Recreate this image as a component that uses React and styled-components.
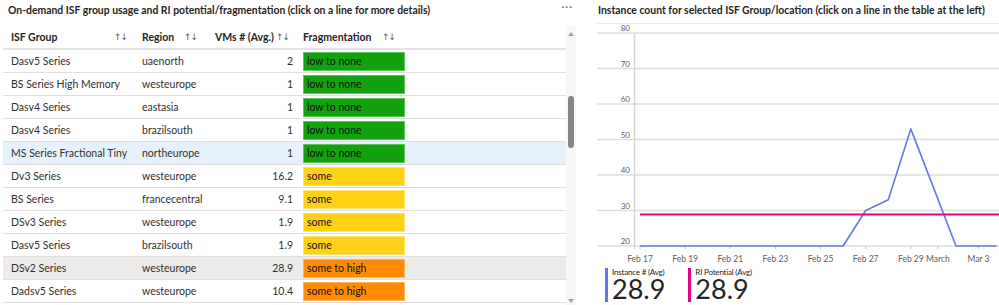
import React from "react";
import styled, { createGlobalStyle } from "styled-components";

const GlobalStyle = createGlobalStyle`
  html, body {
    margin: 0;
    padding: 0;
    background: #ffffff;
    overflow: hidden;
  }
  body {
    font-family: Lato, "Segoe UI", "Liberation Sans", sans-serif;
    color: #252423;
  }
`;

const rows = [
  { group: "Dasv5 Series", region: "uaenorth", vms: "2", frag: "low" },
  { group: "BS Series High Memory", region: "westeurope", vms: "1", frag: "low" },
  { group: "Dasv4 Series", region: "eastasia", vms: "1", frag: "low" },
  { group: "Dasv4 Series", region: "brazilsouth", vms: "1", frag: "low" },
  { group: "MS Series Fractional Tiny", region: "northeurope", vms: "1", frag: "low", state: "selected" },
  { group: "Dv3 Series", region: "westeurope", vms: "16.2", frag: "some" },
  { group: "BS Series", region: "francecentral", vms: "9.1", frag: "some" },
  { group: "DSv3 Series", region: "westeurope", vms: "1.9", frag: "some" },
  { group: "Dasv5 Series", region: "brazilsouth", vms: "1.9", frag: "some" },
  { group: "DSv2 Series", region: "westeurope", vms: "28.9", frag: "high", state: "hover" },
  { group: "Dadsv5 Series", region: "westeurope", vms: "10.4", frag: "high" },
];

const fragStyles = {
  low: { label: "low to none", bg: "#13a10e", border: "#5cc458" },
  some: { label: "some", bg: "#fcd116", border: "#fde274" },
  high: { label: "some to high", bg: "#ff8c00", border: "#ffb357" },
};

const rowBg = {
  selected: "#e6f1fb",
  hover: "#edebe9",
};

// chart scales
const dayX = (d) => 43 + d * 22.57;
const valY = (v) => 223 - (v - 20) * 3.55;

const instance = [
  [0, 20], [9, 20], [10, 30], [11, 33], [12, 53], [13, 36.5], [14, 20], [15.8, 20],
];

const xLabels = [
  { d: 0, t: "Feb 17" },
  { d: 2, t: "Feb 19" },
  { d: 4, t: "Feb 21" },
  { d: 6, t: "Feb 23" },
  { d: 8, t: "Feb 25" },
  { d: 10, t: "Feb 27" },
  { d: 12, t: "Feb 29" },
  { d: 13.2, t: "March" },
  { d: 15, t: "Mar 3" },
];

const SortIcon = () => <Sort>↑↓</Sort>;

const App = () => {
  const path = instance
    .map(([d, v], i) => `${i ? "L" : "M"}${dayX(d).toFixed(1)} ${valY(v).toFixed(1)}`)
    .join(" ");

  return (
    <>
      <GlobalStyle />
      <Page>
        <LeftPanel>
          <TitleBar>
            <Title>
              On-demand ISF group usage and RI potential/fragmentation (click on a line for more details)
            </Title>
            <More>···</More>
          </TitleBar>

          <TableWrap>
            <Table>
              <HeaderRow>
                <HeadCell $pl={8} $pr={10}>
                  <span>ISF Group</span>
                  <SortIcon />
                </HeadCell>
                <HeadCell $pl={5} $pr={10}>
                  <span>Region</span>
                  <SortIcon />
                </HeadCell>
                <HeadCell $pl={0} $pr={9} $end>
                  <span>VMs # (Avg.)</span>
                  <SortIcon />
                </HeadCell>
                <HeadCell $pl={5} $pr={15}>
                  <span>Fragmentation</span>
                  <SortIcon />
                </HeadCell>
                <div />
              </HeaderRow>

              {rows.map((r, i) => (
                <Row key={i} $bg={rowBg[r.state]}>
                  <Cell $pl={8}>{r.group}</Cell>
                  <Cell $pl={5}>{r.region}</Cell>
                  <Cell $pl={0} $end>{r.vms}</Cell>
                  <BadgeCell>
                    <Badge $bg={fragStyles[r.frag].bg} $border={fragStyles[r.frag].border}>
                      {fragStyles[r.frag].label}
                    </Badge>
                  </BadgeCell>
                  <div />
                </Row>
              ))}
            </Table>

            <ScrollBar>
              <Arrow $up />
              <ThumbTrack>
                <Thumb />
              </ThumbTrack>
              <Arrow />
            </ScrollBar>
          </TableWrap>
        </LeftPanel>

        <RightPanel>
          <Title>Instance count for selected ISF Group/location (click on a line in the table at the left)</Title>

          <ChartSvg viewBox="0 0 402 241" width="402" height="241">
            <line x1="0" x2="402" y1="0.5" y2="0.5" stroke="#ececec" strokeWidth="1" />
            {[20, 30, 40, 50, 60, 70, 80].map((v) => (
              <g key={v}>
                <line x1="0" x2="402" y1={valY(v)} y2={valY(v)} stroke="#dedede" strokeWidth="1.5" />
                <text x="33" y={valY(v) - 2} textAnchor="end" fontSize="8" fill="#605e5c">
                  {v}
                </text>
              </g>
            ))}
            <line x1="37.5" x2="37.5" y1={valY(80)} y2={valY(20) + 3} stroke="#d6d6d6" strokeWidth="1.5" />
            {xLabels.map((l) => (
              <g key={l.t}>
                <line x1={dayX(l.d)} x2={dayX(l.d)} y1={valY(20)} y2={valY(20) + 3} stroke="#c8c6c4" />
                <text x={dayX(l.d)} y="239" textAnchor="middle" fontSize="8.5" fill="#605e5c">
                  {l.t}
                </text>
              </g>
            ))}
            <path d={path} fill="none" stroke="#6378ea" strokeWidth="1.6" strokeLinejoin="round" />
            <line x1={dayX(0)} x2="402" y1={valY(28.9)} y2={valY(28.9)} stroke="#e3008c" strokeWidth="2" />
          </ChartSvg>

          <Legend>
            <Stat $color="#6378ea">
              <StatLabel>Instance # (Avg)</StatLabel>
              <StatValue>28.9</StatValue>
            </Stat>
            <Stat $color="#e3008c">
              <StatLabel>RI Potential (Avg)</StatLabel>
              <StatValue>28.9</StatValue>
            </Stat>
          </Legend>
        </RightPanel>
      </Page>
    </>
  );
};

const Page = styled.div`
  display: flex;
  gap: 21px;
  width: 999px;
  height: 305px;
  overflow: hidden;
`;

const LeftPanel = styled.div`
  width: 576px;
  display: flex;
  flex-direction: column;
`;

const TitleBar = styled.div`
  height: 26px;
  display: flex;
  justify-content: space-between;
  align-items: flex-start;
  padding: 3px 3px 0 8px;
  box-sizing: border-box;
`;

const Title = styled.div`
  font-size: 10.4px;
  font-weight: 700;
  line-height: 14px;
  color: #252423;
  white-space: nowrap;
`;

const More = styled.div`
  font-size: 11px;
  line-height: 8px;
  color: #605e5c;
  letter-spacing: 1px;
`;

const TableWrap = styled.div`
  display: flex;
  margin-left: 3px;
  flex: 1;
`;

const Table = styled.div`
  flex: 1;
  display: flex;
  flex-direction: column;
`;

const columns = "134px 70px 91px 112px 1fr";

const HeaderRow = styled.div`
  display: grid;
  grid-template-columns: ${columns};
  height: 22px;
  border-bottom: 2px solid #e3e3e3;
  font-size: 10.5px;
  font-weight: 700;
  color: #252423;
`;

const HeadCell = styled.div`
  display: flex;
  align-items: center;
  justify-content: ${(p) => (p.$end ? "flex-end" : "space-between")};
  gap: 2px;
  padding: 0 ${(p) => p.$pr}px 0 ${(p) => p.$pl}px;
  white-space: nowrap;
`;

const Sort = styled.span`
  font-family: "DejaVu Sans", sans-serif;
  font-size: 9px;
  font-weight: 400;
  color: #605e5c;
  letter-spacing: -1px;
`;

const Row = styled.div`
  display: grid;
  grid-template-columns: ${columns};
  height: 22px;
  border-bottom: 1px solid #e1dfdd;
  background: ${(p) => p.$bg || "transparent"};
  font-size: 10.5px;
  color: #323130;
`;

const Cell = styled.div`
  display: flex;
  align-items: center;
  justify-content: ${(p) => (p.$end ? "flex-end" : "flex-start")};
  padding: 0 5px 0 ${(p) => p.$pl}px;
  white-space: nowrap;
`;

const BadgeCell = styled.div`
  display: flex;
  align-items: center;
  padding: 0 5px;
`;

const Badge = styled.div`
  width: 102px;
  height: 19px;
  box-sizing: border-box;
  background: ${(p) => p.$bg};
  border: 1px solid ${(p) => p.$border};
  color: #111;
  padding-left: 3px;
  display: flex;
  align-items: center;
`;

const ScrollBar = styled.div`
  width: 10px;
  background: #f7f7f7;
  display: flex;
  flex-direction: column;
  align-items: center;
  justify-content: space-between;
  padding: 6px 0 2px;
  box-sizing: border-box;
`;

const Arrow = styled.div`
  width: 0;
  height: 0;
  border-left: 3.5px solid transparent;
  border-right: 3.5px solid transparent;
  ${(p) =>
    p.$up ? "border-bottom: 4px solid #a6a6a6;" : "border-top: 4px solid #a6a6a6;"}
`;

const ThumbTrack = styled.div`
  flex: 1;
  width: 100%;
  display: flex;
  justify-content: center;
`;

const Thumb = styled.div`
  margin-top: 60px;
  width: 6px;
  height: 52px;
  border-radius: 3px;
  background: #868686;
`;

const RightPanel = styled.div`
  flex: 1;
  display: flex;
  flex-direction: column;
  padding-top: 3px;
  min-width: 0;

  ${Title} {
    padding-left: 1px;
    height: 20px;
  }
`;

const ChartSvg = styled.svg`
  display: block;
  font-family: Lato, "Segoe UI", sans-serif;
`;

const Legend = styled.div`
  display: flex;
  gap: 23px;
  padding: 4px 0 0 8px;
`;

const Stat = styled.div`
  border-left: 3px solid ${(p) => p.$color};
  padding-left: 4px;
  display: flex;
  flex-direction: column;
  height: 34px;
  box-sizing: border-box;
`;

const StatLabel = styled.div`
  font-size: 8px;
  line-height: 8px;
  color: #252423;
  letter-spacing: -0.2px;
`;

const StatValue = styled.div`
  font-size: 27px;
  line-height: 26px;
  color: #252423;
`;

export default App;
